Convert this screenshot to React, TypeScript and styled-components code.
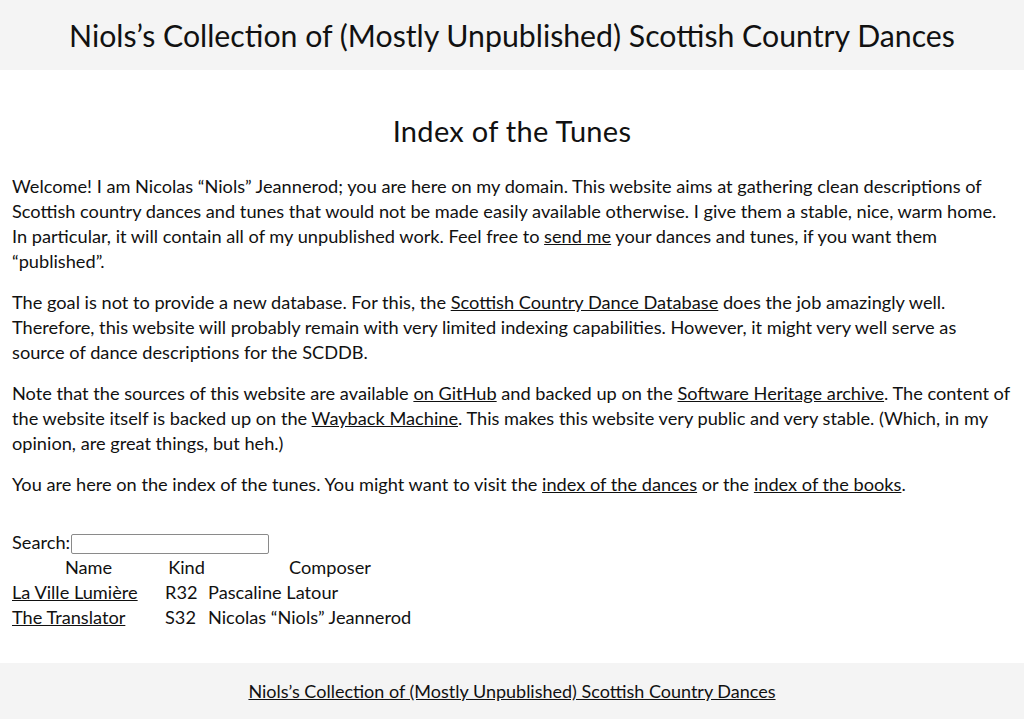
import React from "react";
import styled, { createGlobalStyle } from "styled-components";

const Global = createGlobalStyle`
  html, body { margin: 0; padding: 0; background: #fff; }
  body {
    font-family: "Lato", "Noto Sans", sans-serif;
    font-size: 18.2px;
    line-height: 25px;
    color: #111;
  }
  a { color: #111; text-decoration: underline; }
`;

const Page = styled.div`
  display: flex;
  flex-direction: column;
  min-height: 719px;
`;

const Header = styled.header`
  background: #f4f4f4;
  height: 70px;
  display: flex;
  align-items: center;
  justify-content: center;
`;

const SiteTitle = styled.div`
  font-size: 30.25px;
  line-height: 40px;
`;

const Main = styled.main`
  padding: 0 12px;
  flex: 1;
`;

const H1 = styled.h1`
  font-size: 29px;
  font-weight: 400;
  text-align: center;
  margin: 42px 0 24px;
  line-height: 38px;
  letter-spacing: 0.3px;
`;

const P = styled.p`
  margin: 0 0 16px;
`;

const SearchRow = styled.div`
  display: flex;
  align-items: center;
  margin-top: 33px;
  height: 25px;
`;

const SearchInput = styled.input`
  width: 198px;
  height: 20px;
  box-sizing: border-box;
  border: 1px solid #8a8a8a;
  border-radius: 2px;
  margin: 3px 0 0 1px;
  padding: 0 3px;
  font-size: 13px;
`;

const Table = styled.table`
  border-collapse: collapse;
  border-spacing: 0;
  margin: 0;
`;

const Th = styled.th<{ $w: number }>`
  font-weight: 400;
  text-align: center;
  width: ${(p) => p.$w}px;
  padding: 0;
  line-height: 25px;
`;

const Td = styled.td`
  padding: 0;
  line-height: 25px;
  text-align: left;
  white-space: nowrap;
`;

const Footer = styled.footer`
  background: #f4f4f4;
  height: 56px;
  margin-top: 33px;
  display: flex;
  align-items: center;
  justify-content: center;
  font-size: 18px;
`;

const tunes = [
  { name: "La Ville Lumière", kind: "R32", composer: "Pascaline Latour" },
  { name: "The Translator", kind: "S32", composer: "Nicolas “Niols” Jeannerod" },
];

export default function App() {
  return (
    <>
      <Global />
      <Page>
        <Header>
          <SiteTitle>Niols’s Collection of (Mostly Unpublished) Scottish Country Dances</SiteTitle>
        </Header>
        <Main>
          <H1>Index of the Tunes</H1>
          <P>
            Welcome! I am Nicolas “Niols” Jeannerod; you are here on my domain. This website aims at
            gathering clean descriptions of Scottish country dances and tunes that would not be made
            easily available otherwise. I give them a stable, nice, warm home. In particular, it will
            contain all of my unpublished work. Feel free to <a href="#">send me</a> your dances and
            tunes, if you want them “published”.
          </P>
          <P>
            The goal is not to provide a new database. For this, the{" "}
            <a href="#">Scottish Country Dance Database</a> does the job amazingly well. Therefore,
            this website will probably remain with very limited indexing capabilities. However, it
            might very well serve as source of dance descriptions for the SCDDB.
          </P>
          <P>
            Note that the sources of this website are available <a href="#">on GitHub</a> and backed
            up on the <a href="#">Software Heritage archive</a>. The content of the website itself is
            backed up on the <a href="#">Wayback Machine</a>. This makes this website very public and
            very stable. (Which, in my opinion, are great things, but heh.)
          </P>
          <P>
            You are here on the index of the tunes. You might want to visit the{" "}
            <a href="#">index of the dances</a> or the <a href="#">index of the books</a>.
          </P>
          <SearchRow>
            Search:<SearchInput type="text" />
          </SearchRow>
          <Table>
            <thead>
              <tr>
                <Th $w={153}>Name</Th>
                <Th $w={43}>Kind</Th>
                <Th $w={244}>Composer</Th>
              </tr>
            </thead>
            <tbody>
              {tunes.map((t) => (
                <tr key={t.name}>
                  <Td>
                    <a href="#">{t.name}</a>
                  </Td>
                  <Td>{t.kind}</Td>
                  <Td>{t.composer}</Td>
                </tr>
              ))}
            </tbody>
          </Table>
        </Main>
        <Footer>
          <a href="#">Niols’s Collection of (Mostly Unpublished) Scottish Country Dances</a>
        </Footer>
      </Page>
    </>
  );
}
